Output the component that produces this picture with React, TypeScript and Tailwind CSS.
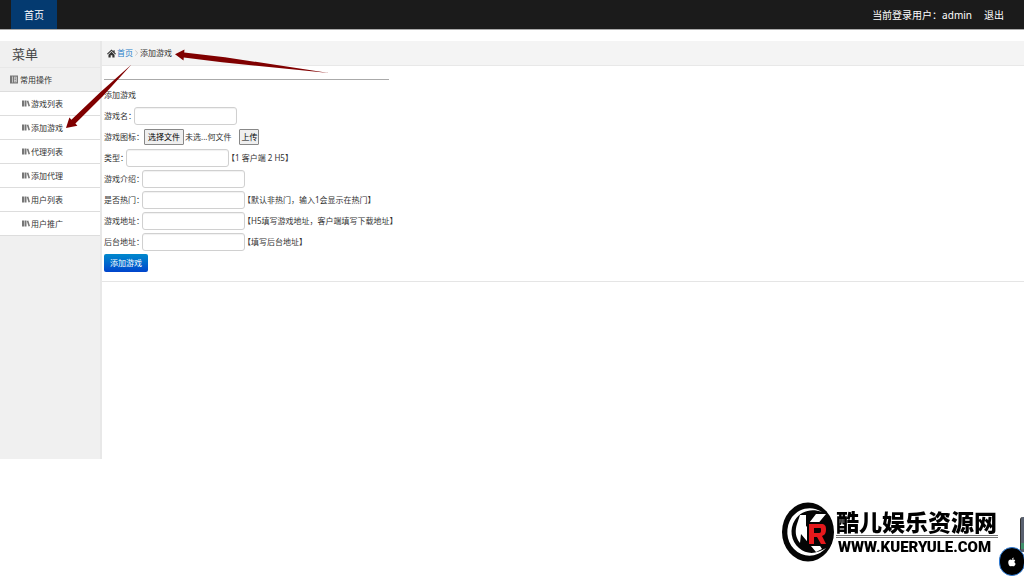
import React from 'react';

const menuItems = ['游戏列表', '添加游戏', '代理列表', '添加代理', '用户列表', '用户推广'];

type Field = { id: string; label: string; note?: string };

const detailFields: Field[] = [
  { id: 'type', label: '类型：', note: '【1 客户端 2 H5】' },
  { id: 'intro', label: '游戏介绍：' },
  { id: 'hot', label: '是否热门：', note: '【默认非热门，输入1会显示在热门】' },
  { id: 'url', label: '游戏地址：', note: '【H5填写游戏地址，客户端填写下载地址】' },
  { id: 'admin-url', label: '后台地址：', note: '【填写后台地址】' },
];

function HomeIcon() {
  return (
    <svg viewBox="0 0 16 16" className="h-[9px] w-[9px] shrink-0 fill-[#333]" aria-hidden="true">
      <path d="M8 0.8 0 8.6l1.3 1.3L8 3.6l6.7 6.3L16 8.6l-2.4-2.3V2h-2.2v2.1z" />
      <path d="M8 5 2.6 10v5.2h3.9v-4h3v4h3.9V10z" />
    </svg>
  );
}

function BookIcon() {
  return (
    <svg viewBox="0 0 16 16" className="h-[9px] w-2 shrink-0" aria-hidden="true">
      <path fill="#777" d="M0 0h16v16H0z" />
      <path fill="#ddd" d="M4 2h1.500v12H4zM8 2.500h5.500v11H8z" />
      <path fill="#777" d="M9 4h3v2H9zM9 7.500h3V9H9zM9 10.500h3V12H9z" />
    </svg>
  );
}

function ShelfIcon() {
  return (
    <svg viewBox="0 0 16 14" className="h-[7px] w-2 shrink-0 fill-[#777]" aria-hidden="true">
      <path d="M0 1h4v12H0zM5 1h4v12H5zM9.6 1.8l3-.8L16 12.2l-3 .8z" />
    </svg>
  );
}

function TextField({ id, label, note }: Field) {
  return (
    <div className="flex h-[21px] items-center">
      <label htmlFor={id}>{label}</label>
      <input
        id={id}
        type="text"
        className="ml-[-2px] h-[18px] w-[103px] rounded-[3px] border border-[#d0d0d0] bg-white px-1 shadow-[inset_0_1px_1px_rgba(0,0,0,0.06)]"
      />
      {note && <span className="ml-[-2px]">{note}</span>}
    </div>
  );
}

function Arrows() {
  return (
    <svg
      width="340"
      height="140"
      viewBox="0 0 340 140"
      className="pointer-events-none absolute top-0 left-0 fill-[#800000]"
      aria-hidden="true"
    >
      <path d="M175 54.2 184.5 49.500l-.3 3L225 57.2 329 73 222 62.200l-38.2-4.600-.3 2.800z" />
      <path d="M66 128l3.400-10.400 2 2.200L100 92.500 131.500 64.500 102.500 96.500 75.400 123.600l2 2.200z" />
    </svg>
  );
}

function Brand() {
  return (
    <div className="pointer-events-none fixed right-[26px] bottom-[14px] flex items-center gap-[2px]">
      <svg width="52" height="60" viewBox="0 0 52 60" aria-hidden="true">
        <ellipse cx="26" cy="30" rx="26" ry="29.5" fill="#050505" />
        <path
          d="M40 10C30 3 17 6 10 15 3 25 4 39 12 47c9 9 23 9 32-1-9 6-19 7-27 0C9 39 7 27 13 18 19 9 29 6 40 10z"
          fill="#fff"
        />
        <path d="M18 13h6v12L34 12h10L29 30l11 17-6 3-15-18-1 9c-5-6-5-13-3-19z" fill="#fff" />
        <path d="M25 20h16c4 0 5 3 5 7 0 5-1 7-4 8l5 9H25z" fill="#050505" />
        <path
          fillRule="evenodd"
          d="M27 22h12c4 0 5 2 5 5 0 4-1 6-4 7l4 8h-5l-4-7h-3v7h-5zm5 4v5h5c2 0 2-1 2-3s0-2-2-2z"
          fill="#e5191c"
        />
      </svg>
      <div className="w-[162px] whitespace-nowrap text-black">
        <div className="font-['Noto_Sans_CJK_SC',sans-serif] text-[23px] leading-[26px] font-black">酷儿娱乐资源网</div>
        <div className="mt-px h-[3px] border-y border-[#777]" />
        <div className="pl-[2px] font-['Roboto',sans-serif] text-[15px] leading-[18px] font-black">WWW.KUERYULE.COM</div>
      </div>
    </div>
  );
}

function FloatingWidgets() {
  return (
    <>
      <div className="fixed right-0 bottom-[24px] h-[35px] w-1 rounded-l-[3px] border-l border-[#333] bg-[#596170]">
        <div className="mt-[26px] h-[6px] bg-[#3f8f6c]" />
      </div>
      <button
        type="button"
        aria-label="Apple"
        className="fixed right-[-1px] bottom-0 flex h-[29px] w-[26px] items-center justify-center rounded-full border border-[#2c7bd8] bg-black"
      >
        <svg viewBox="0 0 16 18" className="h-[10px] w-2 fill-white" aria-hidden="true">
          <path d="M8 5c2-1 5-1.300 6.500 1-2.500 1.500-2 5 .8 6.300C14.500 15 12.500 17.500 11 17.500c-1.200 0-1.700-.6-3-.6s-1.800.6-3 .6C2.500 17.500.5 13 .5 10 .5 6 3 4.200 5 4.200 6.200 4.200 7 5 8 5zM8 4c0-2 1.500-3.700 3.300-4C11.500 2 10 4 8 4z" />
        </svg>
      </button>
    </>
  );
}

export default function App() {
  return (
    <div className="relative min-h-screen overflow-hidden bg-white font-['Noto_Sans','Noto_Sans_CJK_SC',sans-serif] text-[8px] leading-3 text-[#333]">
      <header className="flex h-[30px] items-stretch justify-between border-b border-[#aaa] bg-[#1b1b1b] text-[10px] text-white">
        <nav className="ml-[11px] flex">
          <a href="#home" className="flex items-center bg-[#043a70] px-[13px]">
            首页
          </a>
        </nav>
        <div className="flex items-center gap-3 pr-5">
          <span>当前登录用户：admin</span>
          <a href="#logout">退出</a>
        </div>
      </header>

      <div className="mt-[11px] flex items-start">
        <aside className="h-[418px] w-[102px] shrink-0 border-r-2 border-[#e8e8e8] bg-[#f0f0f0]">
          <h1 className="flex h-[27px] items-center border-b border-[#e8e8e8] pl-3 text-[13px] text-[#444]">
            菜单
          </h1>
          <h2 className="flex h-6 items-center gap-[2px] border-b border-[#ddd] pl-[10px]">
            <BookIcon />
            常用操作
          </h2>
          <ul>
            {menuItems.map((item) => (
              <li key={item} className="border-b border-[#ddd] bg-white">
                <a href="#menu" className="flex h-[23px] items-center gap-px pl-[22px]">
                  <ShelfIcon />
                  {item}
                </a>
              </li>
            ))}
          </ul>
        </aside>

        <main className="min-w-0 flex-1">
          <nav className="flex h-[25px] items-center gap-px border-b border-[#e8e8e8] bg-[#f4f4f4] pl-[5px]">
            <HomeIcon />
            <a href="#home" className="text-[#2a7fc9]">
              首页
            </a>
            <svg viewBox="0 0 4 8" className="mx-px h-[6px] w-[3px] fill-none stroke-[#bbb]" aria-hidden="true">
              <path d="M.5.500 3.500 4 .5 7.500" />
            </svg>
            <span>添加游戏</span>
          </nav>

          <form className="border-b border-[#e5e5e5] pt-[13px] pb-[9px] pl-[2px]">
            <hr className="w-[285px] border-[#aaa]" />
            <div className="mt-1 flex h-[21px] items-center">添加游戏</div>
            <TextField id="name" label="游戏名：" />
            <div className="flex h-[21px] items-center">
              <span>游戏图标：</span>
              <label className="flex h-4 items-center rounded-[1px] border border-[#888] bg-[#efefef] px-[3px] text-black">
                选择文件
                <input type="file" className="sr-only" />
              </label>
              <span className="ml-px">未选...何文件</span>
              <button
                type="button"
                className="ml-2 flex h-4 items-center rounded-[1px] border border-[#888] bg-[#efefef] px-px text-black"
              >
                上传
              </button>
            </div>
            {detailFields.map((field) => (
              <TextField key={field.id} {...field} />
            ))}
            <button
              type="submit"
              className="mt-[2px] block h-[18px] rounded-[2px] bg-linear-to-b from-[#0088cc] to-[#0044cc] px-[6px] text-white"
            >
              添加游戏
            </button>
          </form>
        </main>
      </div>

      <Arrows />
      <Brand />
      <FloatingWidgets />
    </div>
  );
}
